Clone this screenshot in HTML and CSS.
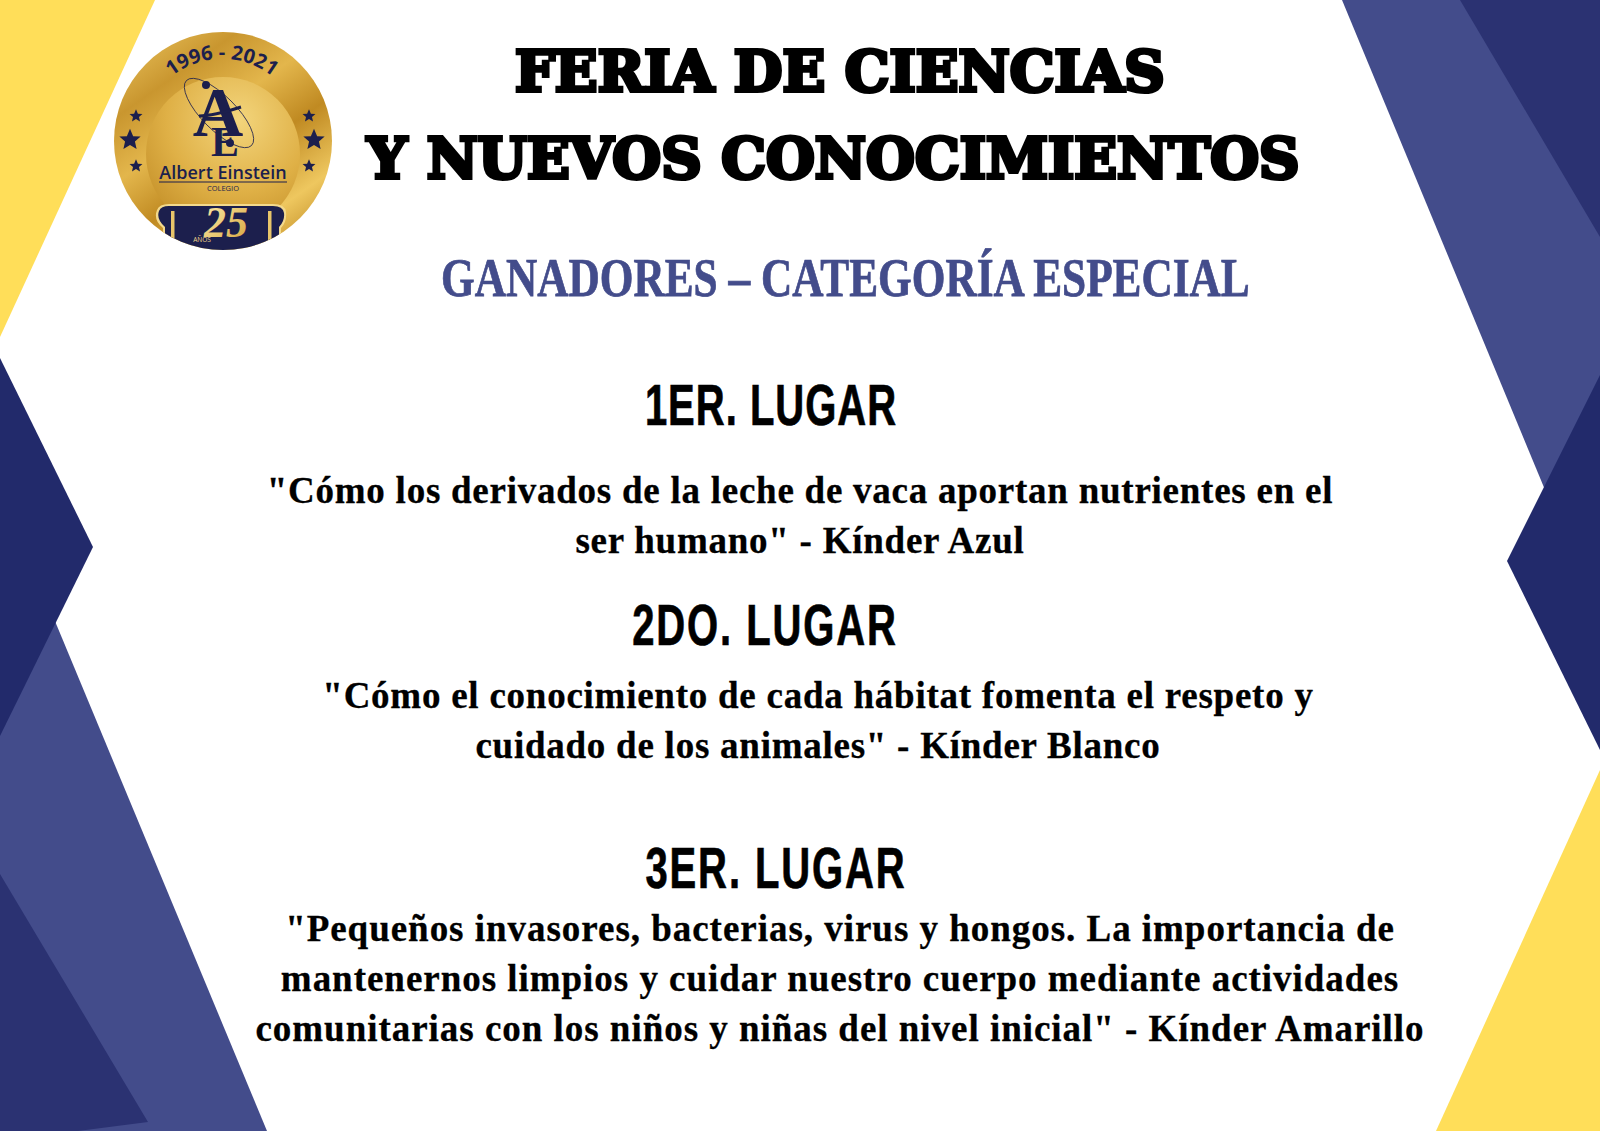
FILE: index.html
```html
<!DOCTYPE html>
<html lang="es">
<head>
<meta charset="utf-8">
<title>Feria de Ciencias y Nuevos Conocimientos</title>
<link rel="stylesheet" href="styles.css">
</head>
<body>
<div class="page">
  <svg class="backdrop" viewBox="0 0 1600 1131" width="1600" height="1131" aria-hidden="true">
    <polygon class="yellow" points="0,0 155,0 0,337"/>
    <polygon class="yellow" points="1600,770 1600,1131 1436,1131"/>
    <polygon class="mid" points="1342,0 1600,0 1600,526 1560,526"/>
    <polygon class="deep" points="1460,0 1600,0 1600,237"/>
    <polygon class="navy" points="1600,375 1507,561 1600,750"/>
    <polygon class="mid" points="20,537 267,1131 0,1131 0,537"/>
    <polygon class="deep" points="0,874 148,1122 78,1131 0,1131"/>
    <polygon class="navy" points="0,358 93,547 0,736"/>
  </svg>

  <header class="header">
    <svg class="seal" viewBox="0 0 220 218" width="220" height="218" role="img" aria-label="Colegio Albert Einstein 25 años">
      <defs>
        <linearGradient id="rim" x1=".1" y1="0" x2=".8" y2="1">
          <stop offset="0" stop-color="#e8c05a"/>
          <stop offset=".22" stop-color="#c9962f"/>
          <stop offset=".42" stop-color="#e3b64c"/>
          <stop offset=".62" stop-color="#c08a22"/>
          <stop offset=".85" stop-color="#eec75f"/>
          <stop offset="1" stop-color="#c8962f"/>
        </linearGradient>
        <radialGradient id="disc" cx=".6" cy=".28" r=".85">
          <stop offset="0" stop-color="#f3d57c"/>
          <stop offset=".55" stop-color="#dfb046"/>
          <stop offset="1" stop-color="#bf8a24"/>
        </radialGradient>
        <linearGradient id="num" x1="0" y1="0" x2="1" y2="1">
          <stop offset="0" stop-color="#fff0b0"/>
          <stop offset="1" stop-color="#d5a23a"/>
        </linearGradient>
        <clipPath id="coin"><circle cx="110" cy="109" r="109"/></clipPath>
        <path id="arc" d="M 30 90 A 81 81 0 0 1 188 90"/>
        <polygon id="star" points="0,-10 2.800,-3.400 9.500,-3.100 4.400,1.300 5.900,8.100 0,4.400 -5.900,8.100 -4.400,1.300 -9.500,-3.100 -2.800,-3.400"/>
      </defs>
      <circle cx="110" cy="109" r="109" fill="url(#rim)"/>
      <circle cx="110" cy="122" r="77" fill="url(#disc)"/>
      <text class="seal-years"><textPath href="#arc" startOffset="50%" text-anchor="middle">1996 - 2021</textPath></text>
      <g class="ink">
        <use href="#star" transform="translate(23,84) scale(.68)"/>
        <use href="#star" transform="translate(17,108) scale(1.12)"/>
        <use href="#star" transform="translate(23,134) scale(.68)"/>
        <use href="#star" transform="translate(196,84) scale(.68)"/>
        <use href="#star" transform="translate(201,108) scale(1.12)"/>
        <use href="#star" transform="translate(196,134) scale(.68)"/>
      </g>
      <ellipse class="orbit" cx="106" cy="81" rx="46" ry="17" transform="rotate(45 106 81)"/>
      <circle class="ink" cx="93" cy="53" r="4"/>
      <circle class="ink" cx="117" cy="111" r="4"/>
      <text class="seal-a" x="105" y="104" text-anchor="middle">A</text>
      <text class="seal-e" x="112" y="124" text-anchor="middle">E</text>
      <path class="seal-bar" d="M86 84 Q100 84 128 75"/>
      <text class="seal-name" x="110" y="147" text-anchor="middle">Albert Einstein</text>
      <rect class="ink" x="46" y="149.500" width="128" height="1"/>
      <text class="seal-colegio" x="110" y="159" text-anchor="middle">COLEGIO</text>
      <g clip-path="url(#coin)">
        <path class="base-edge" d="M50 218 V196 Q40 188 44 178 Q46 172 56 172 H160 Q172 172 173 180 Q174 190 168 196 V218 Z"/>
        <path class="ink" d="M52 218 V195 Q43 187 46 179 Q48 174 56 174 H160 Q170 174 171 181 Q172 189 166 195 V218 Z"/>
        <rect class="pillar" x="58" y="179" width="3.500" height="39"/>
        <rect class="pillar" x="155" y="179" width="3.500" height="39"/>
      </g>
      <text class="seal-25" x="113" y="205" text-anchor="middle" fill="url(#num)">25</text>
      <text class="seal-anos" x="89" y="210" text-anchor="middle">AÑOS</text>
    </svg>
    <h1 class="title">
      <span class="title-line title-first">FERIA DE CIENCIAS</span>
      <span class="title-line title-second">Y NUEVOS CONOCIMIENTOS</span>
    </h1>
  </header>

  <h2 class="subtitle"><span>GANADORES – CATEGORÍA ESPECIAL</span></h2>

  <section class="prize prize-first">
    <h3 class="place"><span>1ER. LUGAR</span></h3>
    <p class="project">"Cómo los derivados de la leche de vaca aportan nutrientes en el<br>ser humano" - Kínder Azul</p>
  </section>
  <section class="prize prize-second">
    <h3 class="place"><span>2DO. LUGAR</span></h3>
    <p class="project">"Cómo el conocimiento de cada hábitat fomenta el respeto y<br>cuidado de los animales" - Kínder Blanco</p>
  </section>
  <section class="prize prize-third">
    <h3 class="place"><span>3ER. LUGAR</span></h3>
    <p class="project">"Pequeños invasores, bacterias, virus y hongos. La importancia de<br>mantenernos limpios y cuidar nuestro cuerpo mediante actividades<br>comunitarias con los niños y niñas del nivel inicial" - Kínder Amarillo</p>
  </section>
</div>
</body>
</html>
```

FILE: styles.css
```css
* { box-sizing: border-box; }
html, body { margin: 0; padding: 0; background: #fff; }
.page {
  position: relative;
  width: 1600px;
  height: 1131px;
  overflow: hidden;
  background: #fff;
  color: #000;
  font-family: "Liberation Serif", "DejaVu Serif", serif;
}
.backdrop { position: absolute; left: 0; top: 0; }
.yellow { fill: #ffde59; }
.mid { fill: #434c8b; }
.deep { fill: #2b3272; }
.navy { fill: #222a6b; }

.header {
  position: relative;
  display: flex;
  align-items: flex-start;
  padding: 32px 0 0 113px;
  height: 250px;
}
.seal { flex: none; }
.ink { fill: #1c1f4d; }
.orbit { fill: none; stroke: #1c1f4d; stroke-width: .8; }
.seal-bar { fill: none; stroke: #1c1f4d; stroke-width: 3; }
.base-edge { fill: #f3d98c; }
.pillar { fill: #e8c56a; }
.seal-years { font: 700 20px "Open Sans", sans-serif; fill: #1c1f4d; }
.seal-a { font: 700 70px "Liberation Serif", serif; fill: #1c1f4d; }
.seal-e { font: 700 42px "Liberation Serif", serif; fill: #1c1f4d; }
.seal-name { font: 600 18px "Open Sans", sans-serif; fill: #1c1f4d; }
.seal-colegio { font: 400 7.500px "Open Sans", sans-serif; fill: #1c1f4d; }
.seal-25 { font: italic 700 44px "Liberation Serif", serif; }
.seal-anos { font: 400 6.500px "Open Sans", sans-serif; fill: #f3d98c; }

.title {
  margin: 0 0 0 34px;
  font-family: "DejaVu Serif", serif;
  font-weight: 700;
  font-size: 56px;
  line-height: 87px;
  letter-spacing: .1px;
  white-space: nowrap;
  -webkit-text-stroke: 4px #000;
}
.title-line { display: block; }
.title-first { padding-left: 148px; margin-top: -4px; }

.subtitle {
  position: relative;
  margin: 0;
  padding-left: 441px;
  height: 56px;
  font-size: 43.300px;
  line-height: 54px;
  color: #434c8b;
  white-space: nowrap;
  -webkit-text-stroke: .6px #434c8b;
}
.subtitle span { display: inline-block; transform: scaleY(1.25); transform-origin: left center; }

.prize { position: relative; text-align: center; white-space: nowrap; }
.place {
  margin: 0;
  font-family: "Liberation Sans Narrow", "Liberation Sans", sans-serif;
  font-weight: 700;
  font-size: 40px;
  line-height: 50px;
  letter-spacing: 1px;
  -webkit-text-stroke: .5px #000;
}
.place span { display: inline-block; transform: scaleY(1.42); }
.project {
  margin: 0;
  font-size: 37px;
  line-height: 50px;
  font-weight: 700;
  letter-spacing: .75px;
  -webkit-text-stroke: .3px #000;
}
.prize-first { padding-top: 74px; }
.prize-first .place { padding-right: 58px; }
.prize-first .project { margin-top: 36px; }
.prize-second { padding-top: 34px; }
.prize-second .place { padding-right: 70px; letter-spacing: 1.900px; }
.prize-second .project { margin-top: 21px; padding-left: 36px; }
.prize-third { padding-top: 72px; }
.prize-third .place { padding-right: 48px; letter-spacing: 1.900px; }
.prize-third .project { margin-top: 11px; padding-left: 80px; letter-spacing: .97px; }
```
